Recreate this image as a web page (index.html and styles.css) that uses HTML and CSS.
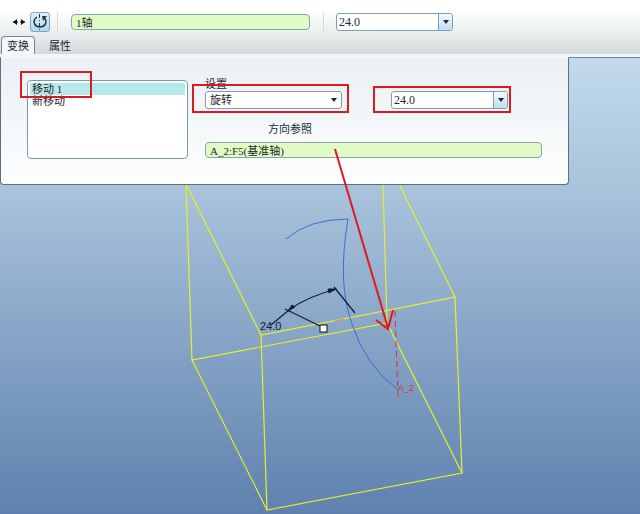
FILE: index.html
```html
<!DOCTYPE html>
<html lang="zh-CN">
<head>
  <meta charset="UTF-8">
  <meta name="viewport" content="width=device-width, initial-scale=1.0">
  <title>移动</title>
  <link rel="stylesheet" href="styles.css">
</head>
<body>

  <header class="dashboard">
    <div class="toolbar">
      <div class="tools">
        <button class="tool" type="button" aria-label="平移">
          <svg width="16" height="16" viewBox="0 0 16 16">
            <path d="M2 8h5M9 8h5" stroke="#111"/>
            <path d="M2 8l4-3v6zM14 8l-4-3v6z" fill="#111"/>
          </svg>
        </button>
        <button class="tool active" type="button" aria-label="旋转">
          <svg width="16" height="16" viewBox="0 0 16 16">
            <path d="M5 3Q2 5 2 8Q3 13 8 13Q13 13 14 8Q14 5 12 4" fill="none" stroke="#26394a" stroke-width="1.5"/>
            <path d="M10 2h5l-4 5z" fill="#26394a"/>
            <path d="M7.5 0v16" stroke="#26394a" stroke-dasharray="4 2 1 2"/>
          </svg>
        </button>
      </div>
      <input class="field reference" type="text" value="1轴" aria-label="移动项目">
      <div class="value-group">
        <div class="combo">
          <input type="text" value="24.0" aria-label="角度">
          <button type="button" aria-label="角度列表"><span class="arrow"></span></button>
        </div>
      </div>
    </div>
    <nav class="tabs">
      <button class="tab selected" type="button">变换</button>
      <button class="tab" type="button">属性</button>
    </nav>
  </header>

  <main class="workspace">
    <!-- Model view -->
    <svg class="model" width="640" height="456" viewBox="0 58 640 456">
      <g fill="none" stroke="#e6f028" stroke-width="1.2">
        <path d="M186 184L192 360L387 323L383 184"/>
        <path d="M186 184L261 335L455 297L399 184"/>
        <path d="M261 335L267 510L462 473L455 297"/>
        <path d="M192 360L267 510M387 323L462 473"/>
      </g>
      <path d="M286 239Q309 219 348 219Q337 284 352 324Q365 365 398 390" fill="none" stroke="#4068e0"/>
      <path d="M271 325L289 310Q308 296 337 289M285 309L320 326M334 287L355 313" fill="none" stroke="#101c38" stroke-width="1.2"/>
      <path d="M288 311L292 305L295 307zM336 289L328 289L329 293z" fill="#101c38" stroke="#101c38"/>
      <path d="M335 321L344 319" stroke="#e88860"/>
      <rect x="320" y="325" width="7" height="7" fill="#fff" stroke="#111"/>
      <path d="M395 311L398 398" fill="none" stroke="#e02840" stroke-dasharray="6 4"/>
      <text class="dimension" x="260" y="330">24.0</text>
      <text class="axis" x="398" y="391">A_2</text>
    </svg>

    <section class="panel">
      <ul class="moves">
        <li class="current">移动 1</li>
        <li>新移动</li>
      </ul>
      <div class="settings">
        <label for="mode">设置</label>
        <div class="setting-row">
          <div class="mode">
            <select id="mode">
              <option>旋转</option>
            </select>
            <span class="arrow"></span>
          </div>
          <div class="combo">
            <input type="text" value="24.0" aria-label="旋转角度">
            <button type="button" aria-label="旋转角度列表"><span class="arrow"></span></button>
          </div>
        </div>
        <label class="direction-label" for="direction">方向参照</label>
        <input class="field" id="direction" type="text" value="A_2:F5(基准轴)">
      </div>
    </section>
  </main>

  <!-- Callouts drawn over the panel and the model -->
  <svg class="callouts" width="640" height="514" viewBox="0 0 640 514">
    <g fill="none" stroke="#e01820" stroke-width="2">
      <path d="M21 72H91V97H21zM193 85H348V112H193zM374 87H510V112H374z"/>
      <path d="M335 149L388 328M376 320L388 329L393 310"/>
    </g>
  </svg>

</body>
</html>
```

FILE: styles.css
```css
* {
  box-sizing: border-box;
}

body {
  display: flex;
  flex-direction: column;
  min-height: 100vh;
  margin: 0;
  color: #1c2a33;
  font: 11px/14px "Liberation Serif", "Noto Sans CJK SC", serif;
}

button,
input,
select {
  margin: 0;
  color: inherit;
  font: inherit;
}

/* Dashboard */
.dashboard {
  padding-top: 12px;
  border-bottom: 3px solid #f1f5f8;
  background: linear-gradient(#fff 10px, #f1f4f4 26px, #d3dadb);
}

.toolbar {
  display: flex;
  align-items: center;
  height: 20px;
  padding-left: 9px;
}

.tools {
  display: flex;
  gap: 1px;
  width: 49px;
  margin-right: 13px;
  border-right: 1px solid #d3d9dc;
}

.tool {
  display: flex;
  align-items: center;
  justify-content: center;
  width: 20px;
  height: 20px;
  padding: 0;
  border: 1px solid transparent;
  border-radius: 3px;
  background: none;
}

.tool.active {
  border-color: #7ea6c4;
  background: linear-gradient(#deeffa, #b3d8f0);
}

.field {
  height: 16px;
  padding: 0 4px;
  border: 1px solid #88a4a8;
  border-radius: 4px;
  background: #dffcc4;
}

.reference {
  width: 239px;
}

.value-group {
  margin-left: 13px;
  padding-left: 12px;
  border-left: 1px solid #d3d9dc;
}

.combo {
  display: flex;
  width: 117px;
  height: 18px;
  overflow: hidden;
  border: 1px solid #7b9fb4;
  border-radius: 3px;
  background: #fff;
}

.combo input {
  flex: 1;
  min-width: 0;
  padding: 0 2px;
  border: 0;
  background: none;
  font-size: 12px;
}

.combo button {
  display: flex;
  align-items: center;
  justify-content: center;
  width: 14px;
  padding: 0;
  border: 0;
  border-left: 1px solid #7b9fb4;
  background: linear-gradient(#f4faff, #c0ddf2);
}

.arrow {
  border: 3px solid transparent;
  border-top: 4px solid #1c2a33;
  border-bottom: 0;
}

.tabs {
  display: flex;
  gap: 7px;
  padding: 4px 0 0 1px;
}

.tab {
  height: 18px;
  padding: 0 6px;
  border: 1px solid transparent;
  border-bottom: 0;
  border-radius: 4px 4px 0 0;
  background: none;
}

.tab.selected {
  padding: 0 5px;
  border-color: #6b8a9b;
  background: #f5f8fa;
}

/* Workspace */
.workspace {
  position: relative;
  flex: 1;
  border-top: 1px solid #6c8492;
  background: linear-gradient(#c3daec, #a9c3db 130px, #5f81af);
}

.model {
  position: absolute;
  top: 0;
  left: 0;
}

.dimension {
  fill: #101c38;
  font: 11px "Liberation Sans", sans-serif;
}

.axis {
  fill: #e02840;
  font: 9px "Liberation Sans", sans-serif;
}

.panel {
  position: relative;
  display: flex;
  gap: 17px;
  max-width: 569px;
  margin-top: -1px;
  padding: 19px 26px 25px 26px;
  border: 1px solid #567288;
  border-top-color: #f1f5f8;
  border-radius: 0 0 4px 4px;
  background: linear-gradient(#ebf0f4, #fdfefe);
}

.moves {
  width: 161px;
  height: 79px;
  margin: 3px 0 0;
  padding: 2px;
  border: 1px solid #7a9caa;
  border-radius: 4px;
  background: #fff;
  list-style: none;
}

.moves li {
  height: 12px;
  padding-left: 2px;
  line-height: 12px;
}

.moves .current {
  background: #b8e9e9;
}

.settings {
  display: flex;
  flex: 1;
  flex-direction: column;
}

.setting-row {
  display: flex;
  gap: 49px;
}

.mode {
  position: relative;
  width: 137px;
}

.mode select {
  width: 100%;
  height: 18px;
  padding: 0 4px;
  border: 1px solid #7b9fb4;
  border-radius: 3px;
  background: #fff;
  appearance: none;
}

.mode .arrow {
  position: absolute;
  top: 7px;
  right: 5px;
  pointer-events: none;
}

.direction-label {
  padding: 13px 0 6px 63px;
}

/* Callouts */
.callouts {
  position: absolute;
  top: 0;
  left: 0;
  pointer-events: none;
}
```
